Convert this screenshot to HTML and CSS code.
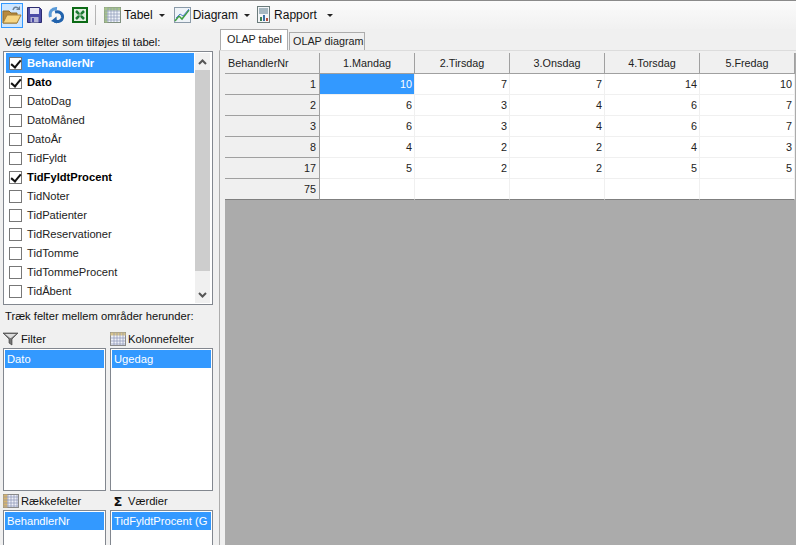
FILE: index.html
```html
<!DOCTYPE html>
<html lang="da">
<head>
    <meta charset="UTF-8">
    <title>OLAP tabel</title>
    <link rel="stylesheet" href="styles.css">
</head>
<body>
    <!-- Værktøjslinje -->
    <div class="toolbar">
        <span class="tool tool-active">
            <svg width="20" height="20" viewBox="0 0 20 20"><path d="M1 6h6l2 2h6v10H1z" fill="#b98a3d" stroke="#8a6a2c"/><path d="M5 10h14l-4 8H1z" fill="#f6d684" stroke="#a5803a"/><path d="M11 5c1-3 3-3.500 5-2" fill="none" stroke="#6f8398" stroke-width="1.500"/><path d="M18 1v4h-4z" fill="#6f8398"/></svg>
        </span>
        <span class="tool tool-save">
            <svg width="15" height="16" viewBox="0 0 15 16"><path d="M.5 .5h12l2 2v13H.5z" fill="#4c4ca6" stroke="#2c2c70"/><rect x="3" y="1" width="9" height="6" fill="#e8e8f4"/><rect x="3.500" y="10" width="8" height="5.500" fill="#b4b4d6"/><rect x="5" y="11" width="2" height="4" fill="#4c4ca6"/></svg>
        </span>
        <span class="tool tool-refresh">
            <svg width="17" height="18" viewBox="0 0 17 18"><path d="M2.500 11C1 6 4 2 9 2.500" fill="none" stroke="#5a9ad8" stroke-width="3"/><path d="M7 6c4-1 8 1 7.500 5.500C14 15 10 16.500 6.500 15" fill="none" stroke="#2263ad" stroke-width="3"/><path d="M8.500 10.500L3 15l6 2.500z" fill="#2263ad"/></svg>
        </span>
        <span class="tool tool-excel">
            <svg width="16" height="16" viewBox="0 0 16 16"><rect x="1" y="1" width="14" height="14" fill="#e4f0e4" stroke="#0c6b16" stroke-width="2"/><path d="M4 4l8 8M12 4l-8 8" stroke="#1d7a34" stroke-width="2.500"/><path d="M3 8h10M8 3v10" stroke="#cfe4cf" stroke-width=".7"/></svg>
        </span>
        <span class="tool-sep"></span>
        <span class="tool-menu menu-tabel">
            <svg width="17" height="18" viewBox="0 0 17 18"><rect x=".5" y="1.500" width="16" height="15" fill="#eef2f8" stroke="#7f8f7f"/><rect x=".5" y="1.500" width="16" height="3" fill="#a8c48c"/><rect x=".5" y="1.500" width="3" height="15" fill="#a8c48c"/><path d="M1 5h15M1 8h15M1 11h15M1 14h15M4 2v14M7 2v14M10 2v14M13 2v14" stroke="#8a9ab8" stroke-width=".7"/></svg>
            <span class="menu-label">Tabel</span>
            <i class="caret"></i>
        </span>
        <span class="tool-menu menu-diagram">
            <svg width="17" height="18" viewBox="0 0 17 18"><rect x=".5" y="1.500" width="16" height="15" fill="#eef3f8" stroke="#8a9aa8"/><path d="M1 15l4-5 3 3 7-9" fill="none" stroke="#3f9f3f" stroke-width="1.500"/><path d="M2 12l4-4 3 2 6-7" fill="none" stroke="#4f7fc4"/></svg>
            <span class="menu-label">Diagram</span>
            <i class="caret"></i>
        </span>
        <span class="tool-menu menu-rapport">
            <svg width="15" height="18" viewBox="0 0 15 18"><rect x="1.500" y=".5" width="12" height="16" fill="#f4f6f8" stroke="#6a7a7a"/><path d="M3 3h9M3 5h9M3 7h9" stroke="#5a7a8a"/><rect x="4" y="11" width="2" height="4" fill="#3f7f4f"/><rect x="7" y="9" width="2" height="6" fill="#3f6fa4"/><rect x="10" y="12" width="2" height="3" fill="#b44f3f"/></svg>
            <span class="menu-label">Rapport</span>
            <i class="caret"></i>
        </span>
    </div>

    <div class="main">
        <!-- Feltvalg -->
        <div class="sidebar">
            <div class="side-label">Vælg felter som tilføjes til tabel:</div>
            <div class="field-box">
                <ul class="field-list">
                    <li class="field checked selected"><i class="check"></i>BehandlerNr</li>
                    <li class="field checked"><i class="check"></i>Dato</li>
                    <li class="field"><i class="check"></i>DatoDag</li>
                    <li class="field"><i class="check"></i>DatoMåned</li>
                    <li class="field"><i class="check"></i>DatoÅr</li>
                    <li class="field"><i class="check"></i>TidFyldt</li>
                    <li class="field checked"><i class="check"></i>TidFyldtProcent</li>
                    <li class="field"><i class="check"></i>TidNoter</li>
                    <li class="field"><i class="check"></i>TidPatienter</li>
                    <li class="field"><i class="check"></i>TidReservationer</li>
                    <li class="field"><i class="check"></i>TidTomme</li>
                    <li class="field"><i class="check"></i>TidTommeProcent</li>
                    <li class="field"><i class="check"></i>TidÅbent</li>
                </ul>
                <div class="scrollbar">
                    <span class="scroll-btn"><svg width="9" height="6" viewBox="0 0 9 6"><path d="M1 5l3.500-3.500L8 5" fill="none" stroke="#555" stroke-width="2"/></svg></span>
                    <span class="scroll-thumb"></span>
                    <span class="scroll-btn scroll-btn-end"><svg width="9" height="6" viewBox="0 0 9 6"><path d="M1 1l3.500 3.500L8 1" fill="none" stroke="#555" stroke-width="2"/></svg></span>
                </div>
            </div>
            <div class="side-label side-label-2">Træk felter mellem områder herunder:</div>
            <div class="zones">
                <div class="zone">
                    <div class="zone-title">
                        <svg width="16" height="14" viewBox="0 0 16 14"><path d="M0 1h15L9 7v6L6 11V7z" fill="#777" stroke="#333" stroke-width=".6"/><path d="M2 2h11L8 6H7z" fill="#ddd"/></svg>
                        <span>Filter</span>
                    </div>
                    <div class="zone-box"><div class="zone-item">Dato</div></div>
                </div>
                <div class="zone">
                    <div class="zone-title">
                        <svg width="16" height="14" viewBox="0 0 16 14"><rect x=".5" y=".5" width="15" height="13" fill="#eef0f8" stroke="#8a8a8a"/><rect x=".5" y=".5" width="15" height="3" fill="#d8c48c"/><path d="M1 6h14M1 9h14M1 12h14M4 1v12M7 1v12M10 1v12M13 1v12" stroke="#8a94b4" stroke-width=".7"/></svg>
                        <span>Kolonnefelter</span>
                    </div>
                    <div class="zone-box"><div class="zone-item">Ugedag</div></div>
                </div>
                <div class="zone">
                    <div class="zone-title">
                        <svg width="16" height="14" viewBox="0 0 16 14"><rect x=".5" y=".5" width="15" height="13" fill="#eef0f8" stroke="#8a8a8a"/><rect x=".5" y=".5" width="4" height="13" fill="#d8b46c"/><path d="M1 3h14M1 6h14M1 9h14M1 12h14M5 1v12M8 1v12M11 1v12M14 1v12" stroke="#8a94b4" stroke-width=".7"/></svg>
                        <span>Rækkefelter</span>
                    </div>
                    <div class="zone-box"><div class="zone-item">BehandlerNr</div></div>
                </div>
                <div class="zone">
                    <div class="zone-title">
                        <span class="sigma">Σ</span>
                        <span>Værdier</span>
                    </div>
                    <div class="zone-box"><div class="zone-item">TidFyldtProcent (G</div></div>
                </div>
            </div>
        </div>

        <!-- Faneblade og tabel -->
        <div class="content">
            <div class="tabs">
                <span class="tab tab-active">OLAP tabel</span>
                <span class="tab">OLAP diagram</span>
            </div>
            <div class="tab-page">
                <table class="grid">
                    <tr>
                        <th class="corner">BehandlerNr</th>
                        <th>1.Mandag</th>
                        <th>2.Tirsdag</th>
                        <th>3.Onsdag</th>
                        <th>4.Torsdag</th>
                        <th>5.Fredag</th>
                    </tr>
                    <tr><th class="row-head">1</th><td class="cell-on">10</td><td>7</td><td>7</td><td>14</td><td>10</td></tr>
                    <tr><th class="row-head">2</th><td>6</td><td>3</td><td>4</td><td>6</td><td>7</td></tr>
                    <tr><th class="row-head">3</th><td>6</td><td>3</td><td>4</td><td>6</td><td>7</td></tr>
                    <tr><th class="row-head">8</th><td>4</td><td>2</td><td>2</td><td>4</td><td>3</td></tr>
                    <tr><th class="row-head">17</th><td>5</td><td>2</td><td>2</td><td>5</td><td>5</td></tr>
                    <tr><th class="row-head">75</th><td></td><td></td><td></td><td></td><td></td></tr>
                </table>
            </div>
        </div>
    </div>
</body>
</html>
```

FILE: styles.css
```css
* {
    margin: 0;
    padding: 0;
    box-sizing: border-box;
}

html, body {
    height: 100%;
    overflow: hidden;
}

body {
    display: flex;
    flex-direction: column;
    background-color: #f0f0f0;
    color: #111;
    font-family: "Liberation Sans", Arial, sans-serif;
    font-size: 11.2px;
}

/* toolbar */
.toolbar {
    height: 29px;
    flex: none;
    display: flex;
    align-items: center;
    padding-left: 1px;
    border-top: 1px solid #8a8a8a;
    background: linear-gradient(#fbfbfb, #f1f1f1);
    font-size: 12px;
}

.tool {
    height: 25px;
    display: flex;
    align-items: center;
    justify-content: center;
}

.tool-active {
    width: 22px;
    background-color: #cde6ff;
    border: 1px solid #3399ff;
}

.tool-save {
    margin-left: 4px;
}

.tool-refresh {
    margin-left: 6px;
}

.tool-excel {
    margin-left: 7px;
}

.tool-sep {
    width: 1px;
    height: 20px;
    margin: 0 8px 0 7px;
    background-color: #b4b4b4;
}

.tool-menu {
    display: flex;
    align-items: center;
}

.menu-label {
    margin-left: 3px;
}

.menu-tabel {
    margin-right: 9px;
}

.menu-diagram {
    margin-right: 6px;
}

.menu-diagram .menu-label {
    margin-left: 2px;
}

.menu-rapport .caret {
    margin-left: 10px;
}

.caret {
    width: 0;
    height: 0;
    margin-left: 6px;
    border: 3px solid transparent;
    border-top: 3px solid #222;
    border-bottom: 0;
}

/* layout */
.main {
    flex: 1;
    min-height: 0;
    display: flex;
}

.sidebar {
    width: 219px;
    flex: none;
    padding-left: 3px;
    overflow: hidden;
}

.side-label {
    height: 22px;
    padding: 6px 0 0 2px;
    line-height: 14px;
    white-space: nowrap;
}

/* field list */
.field-box {
    width: 210px;
    height: 254px;
    display: flex;
    padding: 1px 2px;
    background-color: white;
    border: 1px solid #82878f;
}

.field-list {
    flex: 1;
    list-style: none;
    overflow: hidden;
}

.field {
    height: 19px;
    display: flex;
    align-items: center;
    line-height: 19px;
    color: #222;
    white-space: nowrap;
}

.field:first-child {
    height: 20px;
}

.check {
    width: 13px;
    height: 13px;
    margin: 0 5px 0 3px;
    flex: none;
    background-color: white;
    border: 1px solid #777;
    position: relative;
}

.checked {
    font-weight: bold;
    color: #000;
}

.checked .check::after {
    content: "";
    position: absolute;
    left: 3px;
    top: 0;
    width: 4px;
    height: 8px;
    border: solid #111;
    border-width: 0 2px 2px 0;
    transform: rotate(40deg);
}

.selected {
    background-color: #3399ff;
    color: white;
}

.scrollbar {
    width: 15px;
    flex: none;
    margin-left: 1px;
    display: flex;
    flex-direction: column;
    background-color: #f0f0f0;
}

.scroll-btn {
    height: 17px;
    flex: none;
    display: flex;
    align-items: center;
    justify-content: center;
}

.scroll-thumb {
    height: 201px;
    flex: none;
    background-color: #cdcdcd;
}

.scroll-btn-end {
    margin-top: auto;
}

/* drop zones */
.side-label-2 {
    height: 25px;
    padding-top: 4px;
}

.zones {
    display: grid;
    grid-template-columns: 103px 103px;
    column-gap: 4px;
    row-gap: 1px;
    grid-template-rows: 161px 80px;
}

.zone-title {
    height: 18px;
    display: flex;
    align-items: center;
    gap: 2px;
    white-space: nowrap;
}

.sigma {
    width: 16px;
    font-family: "DejaVu Sans", sans-serif;
    font-size: 13px;
    font-weight: bold;
    text-align: center;
}

.zone-box {
    height: 143px;
    padding: 1px;
    background-color: white;
    border: 1px solid #82878f;
}

.zone-item {
    height: 18px;
    padding-left: 2px;
    line-height: 18px;
    background-color: #3399ff;
    color: white;
    white-space: nowrap;
    overflow: hidden;
}

/* tabs */
.content {
    flex: 1;
    min-width: 0;
    display: flex;
    flex-direction: column;
}

.tabs {
    height: 21px;
    flex: none;
    display: flex;
    align-items: flex-end;
    padding-left: 1px;
    font-size: 10.8px;
}

.tab {
    width: 76px;
    height: 18px;
    padding: 0 0 0 3px;
    line-height: 17px;
    margin-left: 1px;
    border: 1px solid #acacac;
    border-bottom: 0;
    color: #222;
    white-space: nowrap;
}

.tab-active {
    height: 21px;
    width: 68px;
    margin-left: 0;
    padding: 0 6px;
    line-height: 18px;
    background-color: white;
    position: relative;
    z-index: 1;
}

.tab-page {
    flex: 1;
    min-height: 0;
    padding: 2px 0 0 5px;
    border-left: 1px solid #acacac;
    border-top: 1px solid #dcdcdc;
    background-color: #f0f0f0;
}

/* grid */
.grid {
    width: 571px;
    height: 493px;
    display: block;
    background-color: #ababab;
    border-collapse: separate;
    border-spacing: 0;
    table-layout: fixed;
    font-size: 10.8px;
}

.grid tr {
    height: 21px;
}

.grid th {
    width: 95px;
    height: 21px;
    padding: 0 4px;
    background-color: #f0f0f0;
    border-right: 1px solid #a0a0a0;
    border-bottom: 1px solid #a0a0a0;
    color: #222;
    font-weight: normal;
    text-align: center;
}

.grid th.corner {
    padding-left: 3px;
    text-align: left;
}

.grid th.row-head {
    text-align: right;
    padding-right: 3px;
}

.grid td {
    width: 95px;
    height: 21px;
    padding: 0 2px;
    background-color: white;
    border-right: 1px solid #f0f0f0;
    border-bottom: 1px solid #f0f0f0;
    color: #222;
    text-align: right;
}

.grid td.cell-on {
    background-color: #3399ff;
    color: white;
}

.grid tr:last-child th,
.grid tr:last-child td {
    border-bottom: 1px solid #7f7f7f;
}
```
